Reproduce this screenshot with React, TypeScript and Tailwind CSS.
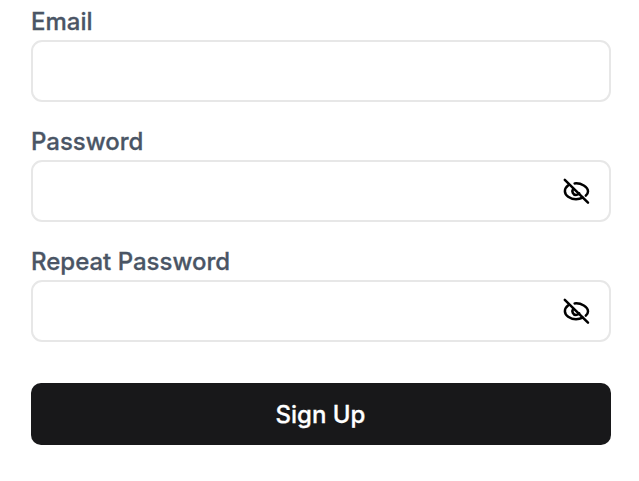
import React from "react";

function EyeOff() {
  return (
    <svg viewBox="0 0 30 30" className="h-[30px] w-[30px] text-black" fill="none" stroke="currentColor" strokeWidth="2.5" strokeLinecap="round" strokeLinejoin="round" aria-hidden="true">
      <path d="M3.8 3.8 L27 26.6" />
      <path d="M7.3 9.3 C5.3 10.8 3.9 13 3.9 15.2 C3.9 19.3 9 23.2 15 23.2 C17.5 23.2 19.7 22.6 21.6 21.6" />
      <path d="M13.6 7.4 C20.3 6.7 27 11.2 27 15.4 C27 17 26 18.5 24.8 19.7" />
      <path d="M12.2 12.8 C10.4 15.5 12 18.9 15 18.9 C16.4 18.9 17.6 18.3 18.2 17.4" />
    </svg>
  );
}

function Field({ label, secret = false }: { label: string; secret?: boolean }) {
  return (
    <label className="block">
      <span className="block h-[30px] text-2xl leading-[30px] font-medium text-gray-600 [-webkit-text-stroke:0.3px_currentColor]">{label}</span>
      <span className="mt-[3px] flex h-[62px] items-center justify-end rounded-[11px] border-2 border-[#e7e7e7] pr-[18px]">
        {secret && <EyeOff />}
      </span>
    </label>
  );
}

export default function App() {
  return (
    <main className="h-[481px] bg-white pt-[7px] pr-[28px] pl-[31px] font-['Inter',sans-serif]">
      <div className="flex flex-col gap-[25px]">
        <Field label="Email" />
        <Field label="Password" secret />
        <Field label="Repeat Password" secret />
      </div>
      <button className="mt-[41px] block h-[62px] w-full rounded-[10px] bg-[#18181a] pt-px pr-px text-2xl font-medium text-white [-webkit-text-stroke:0.3px_currentColor]">Sign Up</button>
    </main>
  );
}
